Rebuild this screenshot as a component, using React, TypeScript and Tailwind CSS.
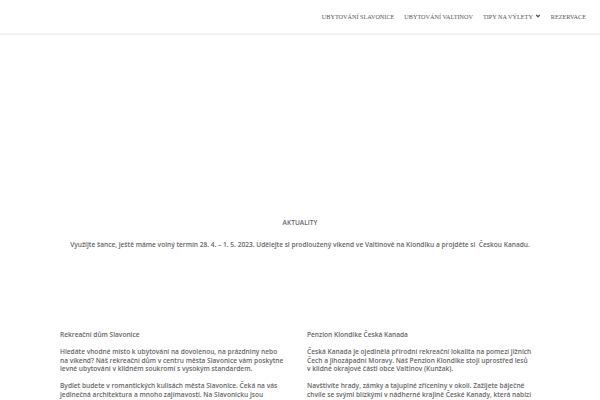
import { ChevronDown } from 'lucide-react';

const navItems = ['UBYTOVÁNÍ SLAVONICE', 'UBYTOVÁNÍ VALTINOV', 'TIPY NA VÝLETY', 'REZERVACE'];

export default function App() {
  return (
    <div className="w-[600px] h-[400px] overflow-hidden bg-white text-[#666] font-['Open_Sans',sans-serif]">
      <header className="h-[34px] flex items-center justify-end pr-[14px] shadow-[0_1px_1px_rgba(0,0,0,0.06)] border-b border-[#f2f2f2]">
        <nav className="flex items-center gap-[10px] font-['Liberation_Serif',serif] text-[6.2px] text-[#555]">
          {navItems.map((item) => (
            <span key={item} className="flex items-center">
              {item}
              {item === 'TIPY NA VÝLETY' && <ChevronDown className="w-[6px] h-[6px] ml-[2px]" strokeWidth={5} />}
            </span>
          ))}
        </nav>
      </header>

      <section className="pt-[184px] text-center font-semibold text-[6.6px] leading-[9px]">
        <p>AKTUALITY</p>
        <p className="mt-[13px]">
          Využijte šance, ještě máme volný termín 28. 4. – 1. 5. 2023. Udělejte si prodloužený víkend ve Valtinově na Klondiku a projděte si&nbsp; Českou Kanadu.
        </p>
      </section>

      <section className="mt-[82px] ml-[60px] w-[480px] flex gap-[14px] text-[6.6px] leading-[8.6px] font-semibold">
        <div className="w-[233px] whitespace-nowrap">
          <p>Rekreační dům Slavonice</p>
          <p className="mt-[8.6px]">
            Hledáte vhodné místo k ubytování na dovolenou, na prázdniny nebo
            <br />
            na víkend? Náš rekreační dům v centru města Slavonice vám poskytne
            <br />
            levné ubytování v klidném soukromí s vysokým standardem.
          </p>
          <p className="mt-[8px]">
            Bydlet budete v romantických kulisách města Slavonice. Čeká na vás
            <br />
            jedinečná architektura a mnoho zajímavostí. Na Slavonicku jsou
          </p>
        </div>
        <div className="w-[233px] whitespace-nowrap">
          <p>Penzion Klondike Česká Kanada</p>
          <p className="mt-[8.6px]">
            Česká Kanada je ojedinělá přírodní rekreační lokalita na pomezí jižních
            <br />
            Čech a jihozápadní Moravy. Náš Penzion Klondike stojí uprostřed lesů
            <br />
            v klidné okrajové části obce Valtinov (Kunžak).
          </p>
          <p className="mt-[8px]">
            Navštivíte hrady, zámky a tajuplné zříceniny v okolí. Zažijete báječné
            <br />
            chvíle se svými blízkými v nádherné krajině České Kanady, která nabízí
          </p>
        </div>
      </section>
    </div>
  );
}
